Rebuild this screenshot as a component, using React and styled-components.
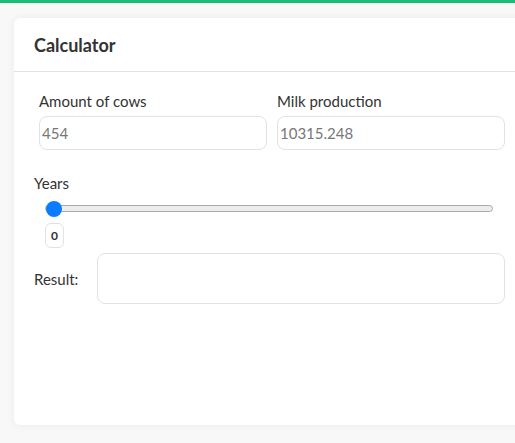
import styled, { createGlobalStyle } from "styled-components";

const GlobalStyle = createGlobalStyle`
    body {
        margin: 0;
        background: #f8f8f8;
        font-family: Lato, "Open Sans", sans-serif;
        color: #333;
        overflow: hidden;
    }
`;

const TopBar = styled.div`
    height: 3px;
    background: #17bf76;
`;

const Page = styled.div`
    padding: 15px 0 18px 14px;
`;

const Card = styled.div`
    width: 511px;
    height: 407px;
    background: #fff;
    border-radius: 6px;
    box-shadow: 0 0 8px rgba(0, 0, 0, 0.06);
`;

const CardHeader = styled.div`
    height: 53px;
    display: flex;
    align-items: center;
    padding: 0 20px;
    border-bottom: 1px solid #e2e2e2;
`;

const Title = styled.h3`
    margin: 0;
    font-size: 18px;
    font-weight: 700;
    color: #333;
`;

const CardBody = styled.div`
    padding: 19px 20px 0;
    width: 471px;
`;

const FieldsRow = styled.div`
    display: grid;
    grid-template-columns: 1fr 1fr;
    gap: 10px;
    padding: 0 0 0 5px;
`;

const Field = styled.div`
    display: flex;
    flex-direction: column;
`;

const Label = styled.label`
    font-size: 15px;
    line-height: 20px;
    color: #333;
    margin-bottom: ${({ $mb }) => $mb ?? 5}px;
`;

const TextInput = styled.input`
    box-sizing: border-box;
    height: 34px;
    width: 100%;
    padding: 0 2px;
    border: 1px solid #e2e2e2;
    border-radius: 8px;
    font-family: inherit;
    font-size: 15px;
    color: #777;
    outline: none;
`;

const YearsBlock = styled.div`
    margin-top: 23px;
`;

const SliderWrap = styled.div`
    padding: 0 12px 0 11px;
    margin-top: 7px;
`;

const Range = styled.input`
    -webkit-appearance: none;
    appearance: none;
    display: block;
    width: 100%;
    margin: 0;
    height: 16px;
    background: transparent;

    &::-webkit-slider-runnable-track {
        height: 7px;
        background: #ececec;
        border: 1px solid #aaa;
        border-radius: 4px;
        box-sizing: border-box;
    }

    &::-webkit-slider-thumb {
        -webkit-appearance: none;
        width: 16px;
        height: 16px;
        margin-top: -5px;
        border-radius: 50%;
        background: #0b7cff;
        border: none;
    }
`;

const ValueBox = styled.div`
    box-sizing: border-box;
    width: 19px;
    height: 25px;
    margin: 7px 0 0 11px;
    display: flex;
    align-items: center;
    justify-content: center;
    border: 1px solid #e2e2e2;
    border-radius: 6px;
    font-size: 12px;
    font-weight: 700;
    color: #333;
`;

const ResultRow = styled.div`
    display: flex;
    align-items: center;
    margin-top: 5px;
`;

const ResultLabel = styled.span`
    width: 63px;
    font-size: 15px;
    color: #333;
`;

const ResultBox = styled.div`
    flex: 1;
    height: 51px;
    box-sizing: border-box;
    border: 1px solid #e2e2e2;
    border-radius: 8px;
`;

export default function App() {
    return (
        <>
            <GlobalStyle />
            <TopBar />
            <Page>
                <Card>
                    <CardHeader>
                        <Title>Calculator</Title>
                    </CardHeader>
                    <CardBody>
                        <FieldsRow>
                            <Field>
                                <Label>Amount of cows</Label>
                                <TextInput readOnly value="454" />
                            </Field>
                            <Field>
                                <Label>Milk production</Label>
                                <TextInput readOnly value="10315.248" />
                            </Field>
                        </FieldsRow>
                        <YearsBlock>
                            <Label $mb={0}>Years</Label>
                            <SliderWrap>
                                <Range type="range" min={0} max={30} defaultValue={0} />
                            </SliderWrap>
                            <ValueBox>0</ValueBox>
                        </YearsBlock>
                        <ResultRow>
                            <ResultLabel>Result:</ResultLabel>
                            <ResultBox />
                        </ResultRow>
                    </CardBody>
                </Card>
            </Page>
        </>
    );
}
